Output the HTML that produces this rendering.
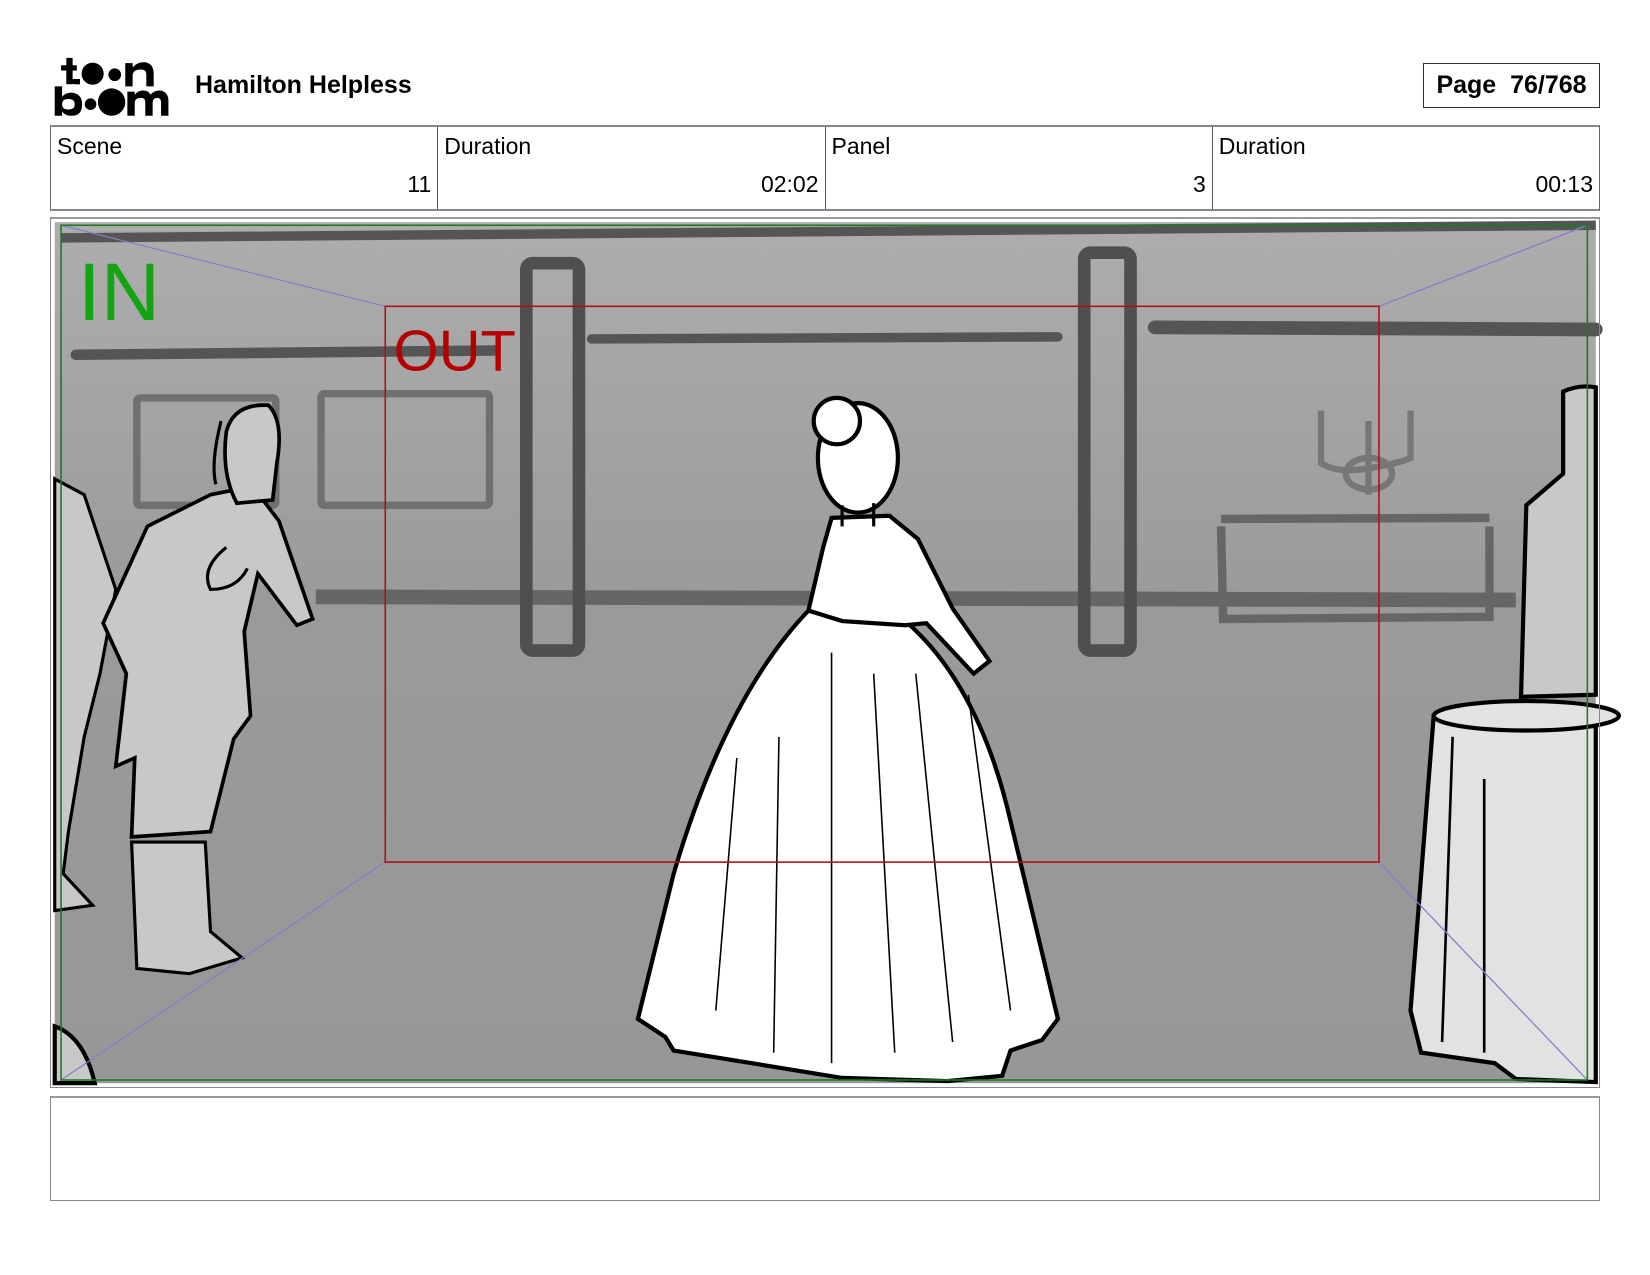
<!DOCTYPE html>
<html><head><meta charset="utf-8"><style>
html,body{margin:0;padding:0;background:#fff;}
body{width:1650px;height:1275px;position:relative;overflow:hidden;font-family:"Liberation Sans",sans-serif;color:#000;}
.abs{position:absolute;}
.title{left:195px;top:71px;font-size:25px;font-weight:bold;}
.page{left:1423px;top:63px;height:45px;border:1px solid #333;font-size:25px;font-weight:bold;line-height:43px;text-align:center;box-sizing:border-box;width:177px;}
.tbl{left:50px;top:125px;width:1550px;height:86px;border:1px solid #666;border-top:2px solid #888;border-bottom:2px solid #888;box-sizing:border-box;display:flex;}
.cell{flex:1;border-right:1px solid #555;position:relative;}
.cell:last-child{border-right:none;}
.lab{position:absolute;left:6px;top:6px;font-size:23px;}
.val{position:absolute;right:6px;top:44px;font-size:23px;}
.frame{left:50px;top:217px;width:1550px;height:871px;border:1px solid #888;border-top:2px solid #999;box-sizing:border-box;}
.notes{left:50px;top:1096px;width:1550px;height:105px;border:1px solid #888;border-top:2px solid #999;box-sizing:border-box;}
</style></head><body>
<svg class="abs" style="left:0;top:0" width="1650" height="1275" viewBox="0 0 1650 1275">
<defs><linearGradient id="bg" x1="0" y1="0" x2="0" y2="1"><stop offset="0" stop-color="#adadad"/><stop offset="0.45" stop-color="#9a9a9a"/><stop offset="1" stop-color="#979797"/></linearGradient></defs>
<g transform="scale(1.05263)">
<!-- logo -->
<rect x="63" y="55" width="6" height="25"/><rect x="58" y="62" width="15" height="5"/>
<path d="M66,75 Q66,81 76,80 L76,75 Z"/>
<circle cx="88" cy="70" r="10.5"/><circle cx="109" cy="71" r="6"/>
<path d="M119,82 L119,60 L126,60 L126,64 Q130,59 137,59 Q146,60 146,70 L146,82 L139,82 L139,71 Q139,66 134,66 Q126,66 126,72 L126,82Z"/>
<path d="M52,110 L52,82 L59,82 L59,92 Q62,88 68,88 Q78,89 78,99 Q78,110 68,110 Q62,110 59,106 L59,110Z M59,99 Q59,104 65,104 Q71,104 71,99 Q71,94 65,94 Q59,94 59,99Z"/>
<circle cx="86" cy="99" r="5.5"/><circle cx="106" cy="97" r="13"/>
<path d="M121,110 L121,87 L128,87 L128,90 Q131,86 136,86 Q141,86 143,90 Q146,86 152,86 Q160,87 160,96 L160,110 L153,110 L153,97 Q153,93 149,93 Q145,93 145,98 L145,110 L138,110 L138,97 Q138,93 134,93 Q128,93 128,98 L128,110Z"/>
<!-- scene bg -->
<rect x="52" y="211" width="1464" height="818" fill="url(#bg)"/>
<path d="M58,226 Q700,218 1516,214" stroke="#555" stroke-width="9" fill="none"/>
<path d="M72,337 L470,333" stroke="#555" stroke-width="10" stroke-linecap="round"/>
<path d="M562,322 L1005,320" stroke="#555" stroke-width="9" stroke-linecap="round"/>
<path d="M1097,311 L1516,313" stroke="#555" stroke-width="13" stroke-linecap="round"/>
<path d="M300,567 L1440,570" stroke="#666" stroke-width="14"/>
<rect x="130" y="378" width="132" height="102" fill="none" stroke="#707070" stroke-width="7" rx="3"/>
<rect x="305" y="374" width="160" height="106" fill="none" stroke="#707070" stroke-width="7" rx="3"/>
<rect x="500" y="250" width="50" height="368" fill="none" stroke="#4f4f4f" stroke-width="12" rx="6"/>
<rect x="1030" y="240" width="44" height="378" fill="none" stroke="#4f4f4f" stroke-width="12" rx="6"/>
<path d="M1160,493 L1415,492 M1160,500 L1162,588 L1415,586 L1415,500" fill="none" stroke="#666" stroke-width="8"/>
<path d="M1255,390 L1255,440 Q1270,450 1300,445 Q1330,440 1340,435 L1340,390 M1300,400 L1300,470 M1300,465 a22,15 0 1,1 1,0" fill="none" stroke="#777" stroke-width="6"/>
<!-- left edge figure -->
<path d="M52,455 L80,470 L110,560 L95,640 L80,700 L65,790 L60,830 L88,860 L52,865 Z" fill="#c8c8c8" stroke="#000" stroke-width="3"/>
<path d="M52,975 Q80,985 90,1029 L52,1029 Z" fill="#c8c8c8" stroke="#000" stroke-width="4"/>
<!-- man -->
<path d="M125,800 L130,920 L180,925 L230,910 L200,885 L195,800 Z" fill="#c8c8c8" stroke="#000" stroke-width="3"/>
<path d="M200,470 L240,462 L265,495 L297,588 L282,594 L245,545 L232,600 L238,680 L222,702 L200,790 L125,795 L128,720 L110,728 L120,640 L98,592 L140,500 Z" fill="#c8c8c8" stroke="#000" stroke-width="3.5"/>
<path d="M215,410 Q222,383 255,385 Q270,400 263,440 L259,475 L225,478 Q210,450 215,410Z" fill="#c8c8c8" stroke="#000" stroke-width="3.5"/>
<path d="M210,400 Q200,440 205,460" stroke="#000" stroke-width="3" fill="none"/>
<path d="M215,520 Q190,540 200,560 Q225,560 235,540" fill="none" stroke="#000" stroke-width="3"/>
<!-- woman -->
<path d="M770,578 L860,590 Q930,650 960,780 L1005,968 L990,988 L960,998 L952,1022 L900,1027 L800,1024 L640,998 L632,985 L606,968 L640,830 Q690,660 770,578Z" fill="#fff" stroke="#000" stroke-width="4"/>
<path d="M700,720 L680,960 M740,700 L735,1000 M790,620 L790,1010 M830,640 L850,1000 M870,640 L905,990 M920,660 L960,960" stroke="#000" stroke-width="1.5" fill="none"/>
<path d="M790,492 L845,490 L872,512 L905,578 L940,628 L925,640 L880,592 L860,594 L800,590 L768,580 L782,520Z" fill="#fff" stroke="#000" stroke-width="4"/>
<ellipse cx="815" cy="435" rx="38" ry="52" fill="#fff" stroke="#000" stroke-width="4"/>
<circle cx="795" cy="400" r="22" fill="#fff" stroke="#000" stroke-width="4"/>
<path d="M800,480 L800,500 M830,478 L830,500" stroke="#000" stroke-width="3"/>
<!-- right side -->
<path d="M1485,372 Q1500,365 1516,368 L1516,660 L1445,662 L1450,480 L1485,450 Z" fill="#c8c8c8" stroke="#000" stroke-width="4"/>
<path d="M1362,680 L1340,960 L1350,1000 L1420,1010 L1440,1025 L1516,1028 L1516,690 Z" fill="#e2e2e2" stroke="#000" stroke-width="4"/>
<ellipse cx="1450" cy="680" rx="88" ry="14" fill="#e2e2e2" stroke="#000" stroke-width="4"/>
<path d="M1380,700 L1370,990 M1410,740 L1410,1000" stroke="#000" stroke-width="2.5"/>
<!-- overlays -->
<path d="M58,214 L366,291 M1508,214 L1310,291 M366,819 L58,1026 M1310,819 L1508,1026" stroke="#8080c8" stroke-width="1.2"/>
<rect x="58" y="214" width="1450" height="812" fill="none" stroke="#1f7a1f" stroke-width="1.5"/>
<rect x="366" y="291" width="944" height="528" fill="none" stroke="#b01010" stroke-width="1.5"/>
<text x="74" y="304" font-family="Liberation Sans" font-size="78" fill="#13a313">IN</text>
<text x="374" y="352" font-family="Liberation Sans" font-size="55" fill="#b50000">OUT</text>
</g>
</svg>
<div class="abs title">Hamilton Helpless</div>
<div class="abs page">Page&nbsp; 76/768</div>
<div class="abs tbl">
<div class="cell"><span class="lab">Scene</span><span class="val">11</span></div>
<div class="cell"><span class="lab">Duration</span><span class="val">02:02</span></div>
<div class="cell"><span class="lab">Panel</span><span class="val">3</span></div>
<div class="cell"><span class="lab">Duration</span><span class="val">00:13</span></div>
</div>
<div class="abs frame"></div>
<div class="abs notes"></div>
</body></html>
